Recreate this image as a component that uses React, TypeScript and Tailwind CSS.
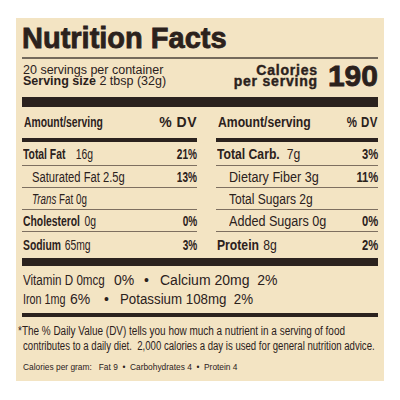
import type { ReactNode } from "react";

type Row = {
  label: ReactNode;
  amount: string;
  dv: string;
  bold?: boolean;
  indent?: boolean;
  gap?: string;
  squeeze?: string;
};

const leftRows: Row[] = [
  { label: "Total Fat", amount: "16g", dv: "21%", bold: true, gap: "ml-[14px]" },
  { label: "Saturated Fat", amount: "2.5g", dv: "13%", indent: true, squeeze: "scale-x-[0.8]" },
  {
    label: (
      <>
        <i>Trans</i> Fat
      </>
    ),
    amount: "0g",
    dv: "",
    indent: true,
    squeeze: "scale-x-[0.7]",
  },
  { label: "Cholesterol", amount: "0g", dv: "0%", bold: true, gap: "ml-[6px]" },
  { label: "Sodium", amount: "65mg", dv: "3%", bold: true, gap: "ml-[5px]" },
];

const rightRows: Row[] = [
  { label: "Total Carb.", amount: "7g", dv: "3%", bold: true, gap: "ml-[8px]" },
  { label: "Dietary Fiber", amount: "3g", dv: "11%", indent: true, squeeze: "scale-x-[0.9]" },
  { label: "Total Sugars", amount: "2g", dv: "", indent: true, squeeze: "scale-x-[0.86]" },
  { label: "Added Sugars", amount: "0g", dv: "0%", indent: true, squeeze: "scale-x-[0.9]" },
  { label: "Protein", amount: "8g", dv: "2%", bold: true, gap: "ml-[5px]" },
];

function Column({
  rows,
  squeeze,
  dvSqueeze,
  headSqueeze,
  indent,
}: {
  rows: Row[];
  squeeze: string;
  dvSqueeze: string;
  headSqueeze: string;
  indent: string;
}) {
  return (
    <div className="flex flex-col">
      <div className="h-[31px] flex items-center justify-between pl-[2px]">
        <span className={`inline-block origin-left whitespace-nowrap font-bold text-[14px] ${squeeze}`}>
          Amount/serving
        </span>
        <span className={`inline-block origin-right font-bold text-[14px] tracking-[0.5px] ${headSqueeze}`}>
          % DV
        </span>
      </div>
      <div className="h-[4px] bg-[#2b221e]" />
      {rows.map((r, i) => (
        <div
          key={i}
          className={`text-[14px] flex items-center justify-between ${
            i === rows.length - 1
              ? "h-[26px]"
              : i === 0
                ? "h-[24px] pt-[2px] border-b border-[#7d6f60]"
                : "h-[22px] pt-[1px] border-b border-[#7d6f60]"
          } ${r.indent ? indent : "pl-[1px]"}`}
        >
          <span className={`inline-block origin-left whitespace-nowrap ${r.squeeze ?? squeeze}`}>
            <span className={r.bold ? "font-bold" : ""}>{r.label}</span>
            {r.gap ? <span className={r.gap}>{r.amount}</span> : <> {r.amount}</>}
          </span>
          <span className={`inline-block origin-right font-bold ${dvSqueeze}`}>{r.dv}</span>
        </div>
      ))}
    </div>
  );
}

export default function App() {
  return (
    <div className="w-[400px] h-[400px] bg-white pt-[18px] pl-4 font-['Liberation_Sans',Arial,sans-serif]">
      <div className="w-[368px] h-[363px] overflow-hidden bg-[#f3e4c3] px-[6px] text-[#2b211c]">
        <h1 className="pt-[6px] text-[29px] leading-none font-bold [-webkit-text-stroke:0.8px]">
          Nutrition Facts
        </h1>
        <div className="mt-[4px] h-[2px] bg-[#746a5c]" />

        <div className="mt-[6px] flex justify-between items-start">
          <div className="text-[12.5px] leading-[11px] pl-[1px]">
            <div>20 servings per container</div>
            <div>
              <b>Serving size</b> 2 tbsp (32g)
            </div>
          </div>
          <div className="flex items-end gap-[10px]">
            <div className="text-right font-bold text-[14px] leading-[11px] tracking-[0.8px] [-webkit-text-stroke:0.4px]">
              <div>Calories</div>
              <div>per serving</div>
            </div>
            <div className="font-bold text-[30px] leading-[22px] [-webkit-text-stroke:0.8px]">190</div>
          </div>
        </div>

        <div className="mt-[10px] h-[10px] bg-[#2b221e]" />

        <div className="grid grid-cols-[175px_162px] gap-x-[19px]">
          <Column
            rows={leftRows}
            squeeze="scale-x-[0.74]"
            dvSqueeze="scale-x-[0.72]"
            headSqueeze="scale-x-[1]"
            indent="pl-[10px]"
          />
          <Column
            rows={rightRows}
            squeeze="scale-x-[0.87]"
            dvSqueeze="scale-x-[0.8]"
            headSqueeze="scale-x-[0.82]"
            indent="pl-[13px]"
          />
        </div>

        <div className="h-[8px] bg-[#2b221e]" />

        <div className="pt-[5px] text-[14px] leading-[19px] pl-[1px] whitespace-nowrap">
          <div className="flex">
            <span className="w-[91px]">
              <span className="inline-block origin-left scale-x-[0.83]">Vitamin D 0mcg</span>
            </span>
            <span className="w-[30px]">0%</span>
            <span className="w-[16px]">•</span>
            <span>Calcium 20mg&nbsp; 2%</span>
          </div>
          <div className="flex">
            <span className="w-[47px]">
              <span className="inline-block origin-left scale-x-[0.77]">Iron 1mg</span>
            </span>
            <span className="w-[34px]">6%</span>
            <span className="w-[16px]">•</span>
            <span className="inline-block origin-left scale-x-[0.95]">Potassium 108mg&nbsp; 2%</span>
          </div>
        </div>

        <div className="mt-[4px] h-[3.5px] bg-[#2b221e]" />

        <div className="pt-[7px] text-[12px] leading-[15.5px] whitespace-nowrap">
          <div className="-ml-[4px]">
            <span className="inline-block origin-left scale-x-[0.83]">
              *The % Daily Value (DV) tells you how much a nutrient in a serving of food
            </span>
          </div>
          <div className="ml-[1px]">
            <span className="inline-block origin-left scale-x-[0.8]">
              contributes to a daily diet.&nbsp; 2,000 calories a day is used for general nutrition advice.
            </span>
          </div>
          <div className="mt-[4px] ml-[1px] text-[9.5px]">
            <span className="inline-block origin-left scale-x-[0.88]">
              Calories per gram:&nbsp;&nbsp; Fat 9&nbsp; •&nbsp; Carbohydrates 4&nbsp; •&nbsp; Protein 4
            </span>
          </div>
        </div>
      </div>
    </div>
  );
}
